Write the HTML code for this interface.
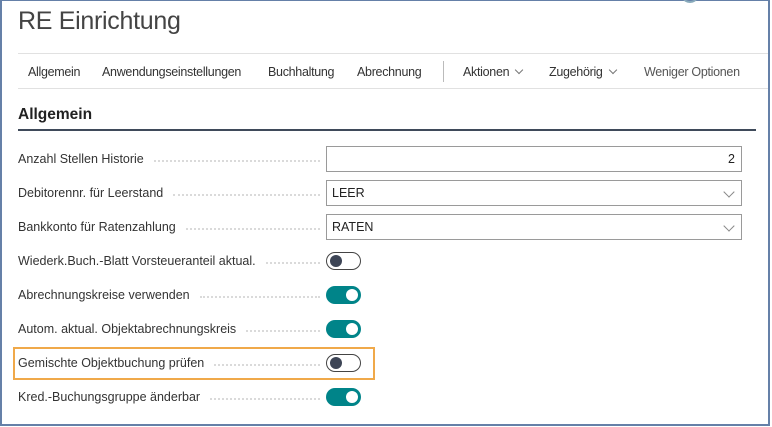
<!DOCTYPE html><html><head><style>
*{box-sizing:border-box;margin:0;padding:0}
body{width:772px;height:427px;background:#fff;font-family:"Liberation Sans",sans-serif;color:#333;position:relative;overflow:hidden}
.frame{position:absolute;left:0;top:0;width:770px;height:426px;border:2px solid #6580a8;border-top:1px solid #6580a8}
.t{position:absolute;left:18px;top:7px;font-size:25px;color:#444;font-weight:normal;letter-spacing:-0.3px}
.hl{position:absolute;left:18px;right:4px;height:1px;background:#e1e1e1}
.nav{position:absolute;top:65px;font-size:12.5px;color:#333;white-space:nowrap;letter-spacing:-0.3px}
.h{position:absolute;left:18px;top:106px;font-size:15.5px;font-weight:bold;color:#222}
.ul{position:absolute;left:18px;right:16px;top:129px;height:2px;background:#3f4a5a}
.row{position:absolute;left:18px;width:302px;font-size:12.5px;color:#333;display:flex;align-items:center;height:20px}
.row span{white-space:nowrap}
.row i{flex:1;border-bottom:2px dotted #dadada;margin:0 0 0 10px;height:1px;margin-top:3px}
.inp{position:absolute;left:326px;width:416px;height:26px;border:1px solid #9a9a9a;font-size:12.5px;padding:5px 5px;color:#222}
.chev{position:absolute;right:8px;top:7px;width:8px;height:8px;border-right:1px solid #888;border-bottom:1px solid #888;transform:rotate(45deg)}
.tg{position:absolute;left:326px;width:35px;height:18px;border-radius:9px}
.off{border:1px solid #444;background:#fff}
.off:after{content:"";position:absolute;left:3px;top:2px;width:12px;height:12px;border-radius:50%;background:#3d4556}
.on{background:#008489}
.on:after{content:"";position:absolute;right:3px;top:3px;width:12px;height:12px;border-radius:50%;background:#fff}
.cv{display:inline-block;width:6px;height:6px;border-right:1px solid #777;border-bottom:1px solid #777;transform:rotate(45deg);margin-left:7px;position:relative;top:-3px}
</style></head><body>
<div class="frame"></div>
<div style="position:absolute;left:683px;top:-6px;width:14px;height:9px;border:2px solid #8ab;border-radius:50%"></div>
<div class="t">RE Einrichtung</div>
<div class="hl" style="top:53px"></div>
<div class="nav" style="left:28px">Allgemein</div>
<div class="nav" style="left:102px">Anwendungseinstellungen</div>
<div class="nav" style="left:268px">Buchhaltung</div>
<div class="nav" style="left:357px">Abrechnung</div>
<div style="position:absolute;left:443px;top:61px;width:1px;height:21px;background:#bbb"></div>
<div class="nav" style="left:463px">Aktionen<span class="cv"></span></div>
<div class="nav" style="left:549px">Zugehörig<span class="cv"></span></div>
<div class="nav" style="left:644px;color:#555">Weniger Optionen</div>
<div class="hl" style="top:88px"></div>
<div class="h">Allgemein</div>
<div class="ul"></div>

<div class="row" style="top:149px"><span>Anzahl Stellen Historie</span><i></i></div>
<div class="inp" style="top:146px;text-align:right;padding-right:6px">2</div>
<div class="row" style="top:183px"><span>Debitorennr. für Leerstand</span><i></i></div>
<div class="inp" style="top:180px">LEER<span class="chev"></span></div>
<div class="row" style="top:217px"><span>Bankkonto für Ratenzahlung</span><i></i></div>
<div class="inp" style="top:214px">RATEN<span class="chev"></span></div>
<div class="row" style="top:251px"><span>Wiederk.Buch.-Blatt Vorsteueranteil aktual.</span><i></i></div>
<div class="tg off" style="top:252px"></div>
<div class="row" style="top:285px"><span>Abrechnungskreise verwenden</span><i></i></div>
<div class="tg on" style="top:286px"></div>
<div class="row" style="top:319px"><span>Autom. aktual. Objektabrechnungskreis</span><i></i></div>
<div class="tg on" style="top:320px"></div>
<div style="position:absolute;left:13px;top:347px;width:362px;height:33px;border:2px solid #f0a94a"></div>
<div class="row" style="top:353px"><span>Gemischte Objektbuchung prüfen</span><i></i></div>
<div class="tg off" style="top:354px"></div>
<div class="row" style="top:387px"><span>Kred.-Buchungsgruppe änderbar</span><i></i></div>
<div class="tg on" style="top:388px"></div>
</body></html>
